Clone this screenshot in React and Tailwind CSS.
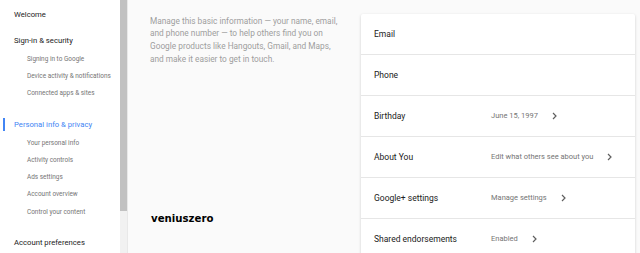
const subSecurity = ["Signing in to Google", "Device activity & notifications", "Connected apps & sites"];
const subPrivacy = ["Your personal info", "Activity controls", "Ads settings", "Account overview", "Control your content"];

const rows = [
  { label: "Email" },
  { label: "Phone" },
  { label: "Birthday", value: "June 15, 1997" },
  { label: "About You", value: "Edit what others see about you" },
  { label: "Google+ settings", value: "Manage settings" },
  { label: "Shared endorsements", value: "Enabled" },
];

const Chevron = () => (
  <svg width="5" height="8" viewBox="0 0 5 8" className="ml-[14px] shrink-0">
    <path d="M1 1 L4 4 L1 7" fill="none" stroke="#5f5f5f" strokeWidth="1.2" />
  </svg>
);

const SubItem = ({ children }) => (
  <div className="h-[17.3px] flex items-center pl-[27px] text-[6.45px] text-[#757575] whitespace-nowrap">
    {children}
  </div>
);

export default function App() {
  return (
    <div className="w-[640px] h-[253px] overflow-hidden flex bg-[#fafafa] font-['Roboto',sans-serif]">
      {/* sidebar */}
      <div className="w-[120px] shrink-0 bg-white flex flex-col pt-[6px]">
        <div className="h-[17px] flex items-center pl-[14px] text-[7.7px] text-[#212121]">Welcome</div>
        <div className="mt-[9px] h-[17px] flex items-center pl-[14px] text-[7.7px] text-[#212121]">Sign-in &amp; security</div>
        <div className="mt-[2px]">
          {subSecurity.map((s) => (
            <SubItem key={s}>{s}</SubItem>
          ))}
        </div>
        <div className="mt-[13.3px] h-[17px] flex items-center pl-[3px] text-[7.7px] text-[#4285f4]">
          <div className="w-[2px] h-[13px] bg-[#4285f4] mr-[9px]" />
          Personal info &amp; privacy
        </div>
        <div className="mt-[1.5px]">
          {subPrivacy.map((s) => (
            <SubItem key={s}>{s}</SubItem>
          ))}
        </div>
        <div className="mt-[13.6px] h-[17px] flex items-center pl-[14px] text-[7.7px] text-[#212121]">Account preferences</div>
      </div>

      {/* scrollbar */}
      <div className="w-[8px] shrink-0 flex flex-col border-r border-[#e8e8e8]">
        <div className="h-[211px] bg-[#c1c1c1]" />
        <div className="flex-1 bg-[#f1f1f1]" />
      </div>

      {/* main */}
      <div className="flex-1 flex">
        <div className="w-[233px] shrink-0 flex flex-col pl-[22px] pt-[14.5px]">
          <p className="text-[8.3px] leading-[12.7px] text-[#9e9e9e] whitespace-nowrap">
            Manage this basic information — your name, email,
            <br />
            and phone number — to help others find you on
            <br />
            Google products like Hangouts, Gmail, and Maps,
            <br />
            and make it easier to get in touch.
          </p>
          <div className="mt-[146px] pl-[1px] font-['DejaVu_Sans',sans-serif] font-bold text-[10.2px] text-black">
            veniuszero
          </div>
        </div>

        <div className="mt-[14px] w-[274px] shrink-0 bg-white rounded-t-[2px] shadow-[0_1px_3px_rgba(0,0,0,0.18)] self-start">
          {rows.map((r) => (
            <div key={r.label} className="h-[41px] flex items-center border-b border-[#e6e6e6]">
              <div className="w-[130px] shrink-0 pl-[13px] text-[8.5px] text-[#212121] whitespace-nowrap">{r.label}</div>
              {r.value && (
                <div className="flex items-center text-[7.5px] text-[#757575] whitespace-nowrap">
                  {r.value}
                  <Chevron />
                </div>
              )}
            </div>
          ))}
        </div>
      </div>
    </div>
  );
}
